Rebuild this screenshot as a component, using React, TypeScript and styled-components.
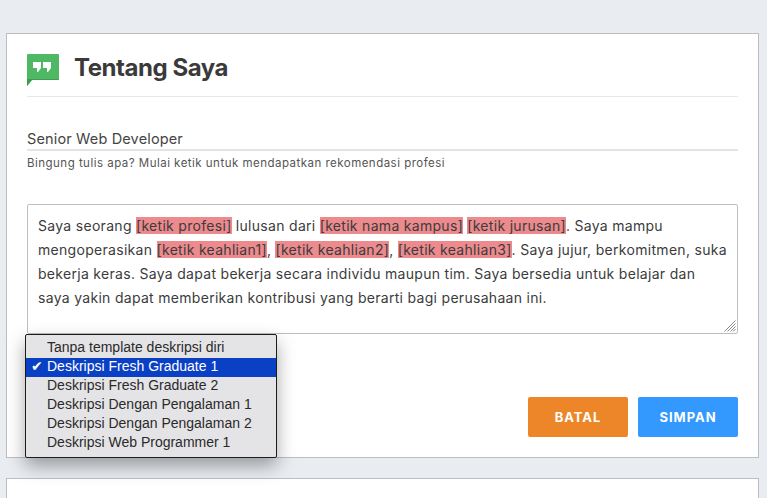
import { createGlobalStyle, styled } from 'styled-components'

const templates = [
  'Tanpa template deskripsi diri',
  'Deskripsi Fresh Graduate 1',
  'Deskripsi Fresh Graduate 2',
  'Deskripsi Dengan Pengalaman 1',
  'Deskripsi Dengan Pengalaman 2',
  'Deskripsi Web Programmer 1',
]

export default function App() {
  return (
    <>
      <GlobalStyle />
      <Page>
        <Card>
          <Header>
            <HangoutsIcon />
            <Title>Tentang Saya</Title>
          </Header>
          <ProfessionInput>Senior Web Developer</ProfessionInput>
          <Hint>Bingung tulis apa? Mulai ketik untuk mendapatkan rekomendasi profesi</Hint>
          <TextBox>
            Saya seorang <Mark>[ketik profesi]</Mark> lulusan dari <Mark>[ketik nama kampus]</Mark>{' '}
            <Mark>[ketik jurusan]</Mark>. Saya mampu
            <br />
            mengoperasikan <Mark>[ketik keahlian1]</Mark>, <Mark>[ketik keahlian2]</Mark>,{' '}
            <Mark>[ketik keahlian3]</Mark>. Saya jujur, berkomitmen, suka
            <br />
            bekerja keras. Saya dapat bekerja secara individu maupun tim. Saya bersedia untuk belajar dan
            <br />
            saya yakin dapat memberikan kontribusi yang berarti bagi perusahaan ini.
            <Grip width="12" height="12" viewBox="0 0 12 12">
              <path d="M11.5 .5L.5 11.5M11.5 3.5L3.5 11.5M11.5 6.5L6.5 11.5M11.5 9L9 11.5" stroke="#888" strokeWidth="1" fill="none" />
            </Grip>
          </TextBox>
          <Menu>
            {templates.map((t, i) => (
              <MenuItem key={t} $active={i === 1}>
                {i === 1 && <Check>✔</Check>}
                {t}
              </MenuItem>
            ))}
          </Menu>
          <Actions>
            <ActionButton $color="#ed8628">BATAL</ActionButton>
            <ActionButton $color="#3399ff">SIMPAN</ActionButton>
          </Actions>
        </Card>
        <NextCard />
      </Page>
    </>
  )
}

function HangoutsIcon() {
  return (
    <IconSvg width="32" height="32" viewBox="0 0 32 32">
      <path d="M1 0h30a1 1 0 0 1 1 1v24a1 1 0 0 1-1 1H5l-5 6V1a1 1 0 0 1 1-1z" fill="#4fb865" />
      <path d="M0 25h32a1 1 0 0 1-1 1H5l-5 6z" fill="#3f9a52" />
      <path d="M6 8h8v6l-3 4h-1v-4H6zM16 8h8v6l-3 4h-1v-4h-4z" fill="#fff" />
    </IconSvg>
  )
}

const GlobalStyle = createGlobalStyle`
  html, body {
    margin: 0;
    padding: 0;
    background: #e9ecf1;
    overflow: hidden;
  }
  body {
    font-family: "Inter", "Liberation Sans", sans-serif;
    color: #3c3c3c;
  }
`

const Page = styled.div`
  width: 767px;
  height: 498px;
  padding: 33px 8px 0 6px;
  box-sizing: border-box;
  overflow: hidden;
`

const Card = styled.div`
  position: relative;
  box-sizing: border-box;
  height: 425px;
  padding: 20px 20px 0;
  background: #fff;
  border: 1px solid #bcbec2;
`

const NextCard = styled.div`
  height: 60px;
  margin-top: 20px;
  background: #fff;
  border: 1px solid #bcbec2;
`

const Header = styled.div`
  display: flex;
  align-items: flex-start;
  gap: 15px;
  height: 42px;
  border-bottom: 1px solid #e8e8e8;
`

const IconSvg = styled.svg`
  display: block;
  flex: none;
`

const Title = styled.h1`
  margin: 0;
  font-size: 24px;
  line-height: 27px;
  font-weight: 700;
  letter-spacing: -0.45px;
  color: #3a3a3a;
`

const ProfessionInput = styled.div`
  margin-top: 32px;
  height: 20px;
  font-size: 14.5px;
  line-height: 19px;
  letter-spacing: 0.15px;
  color: #444;
  border-bottom: 2px solid #e4e4e4;
`

const Hint = styled.div`
  margin-top: 4px;
  font-size: 11.5px;
  line-height: 16px;
  letter-spacing: 0.48px;
  color: #555;
`

const TextBox = styled.div`
  position: relative;
  box-sizing: border-box;
  height: 130px;
  margin-top: 33px;
  padding: 9px 10px;
  font-size: 14px;
  line-height: 24px;
  letter-spacing: 0.3px;
  white-space: nowrap;
  color: #3c3c3c;
  border: 1px solid #bcbec2;
  border-radius: 2px;
`

const Mark = styled.span`
  background: #ec8a8d;
`

const Grip = styled.svg`
  position: absolute;
  right: 1px;
  bottom: 1px;
`

const Menu = styled.div`
  position: absolute;
  left: 18px;
  top: 300px;
  width: 252px;
  box-sizing: border-box;
  padding: 4px 0;
  background: #e4e4e7;
  border: 1px solid #1c1c1c;
  border-radius: 2px;
  box-shadow: 0 8px 18px rgba(0, 0, 0, 0.35);
  font-family: "Liberation Sans", Arial, sans-serif;
  z-index: 2;
`

const MenuItem = styled.div<{ $active?: boolean }>`
  position: relative;
  height: 19px;
  padding-left: 21px;
  font-size: 14px;
  line-height: 17px;
  white-space: nowrap;
  color: ${(p) => (p.$active ? '#fff' : '#2a2a2a')};
  background: ${(p) => (p.$active ? '#0a40c4' : 'transparent')};
`

const Check = styled.span`
  position: absolute;
  left: 5px;
  font-size: 14px;
  font-family: "DejaVu Sans", sans-serif;
`

const Actions = styled.div`
  display: flex;
  justify-content: flex-end;
  gap: 10px;
  margin-top: 63px;
`

const ActionButton = styled.button<{ $color: string }>`
  width: 100px;
  height: 40px;
  padding: 0;
  border: none;
  border-radius: 2px;
  background: ${(p) => p.$color};
  color: #fff;
  font-family: "Inter", "Liberation Sans", sans-serif;
  font-size: 13px;
  font-weight: 700;
  letter-spacing: 1px;
`
